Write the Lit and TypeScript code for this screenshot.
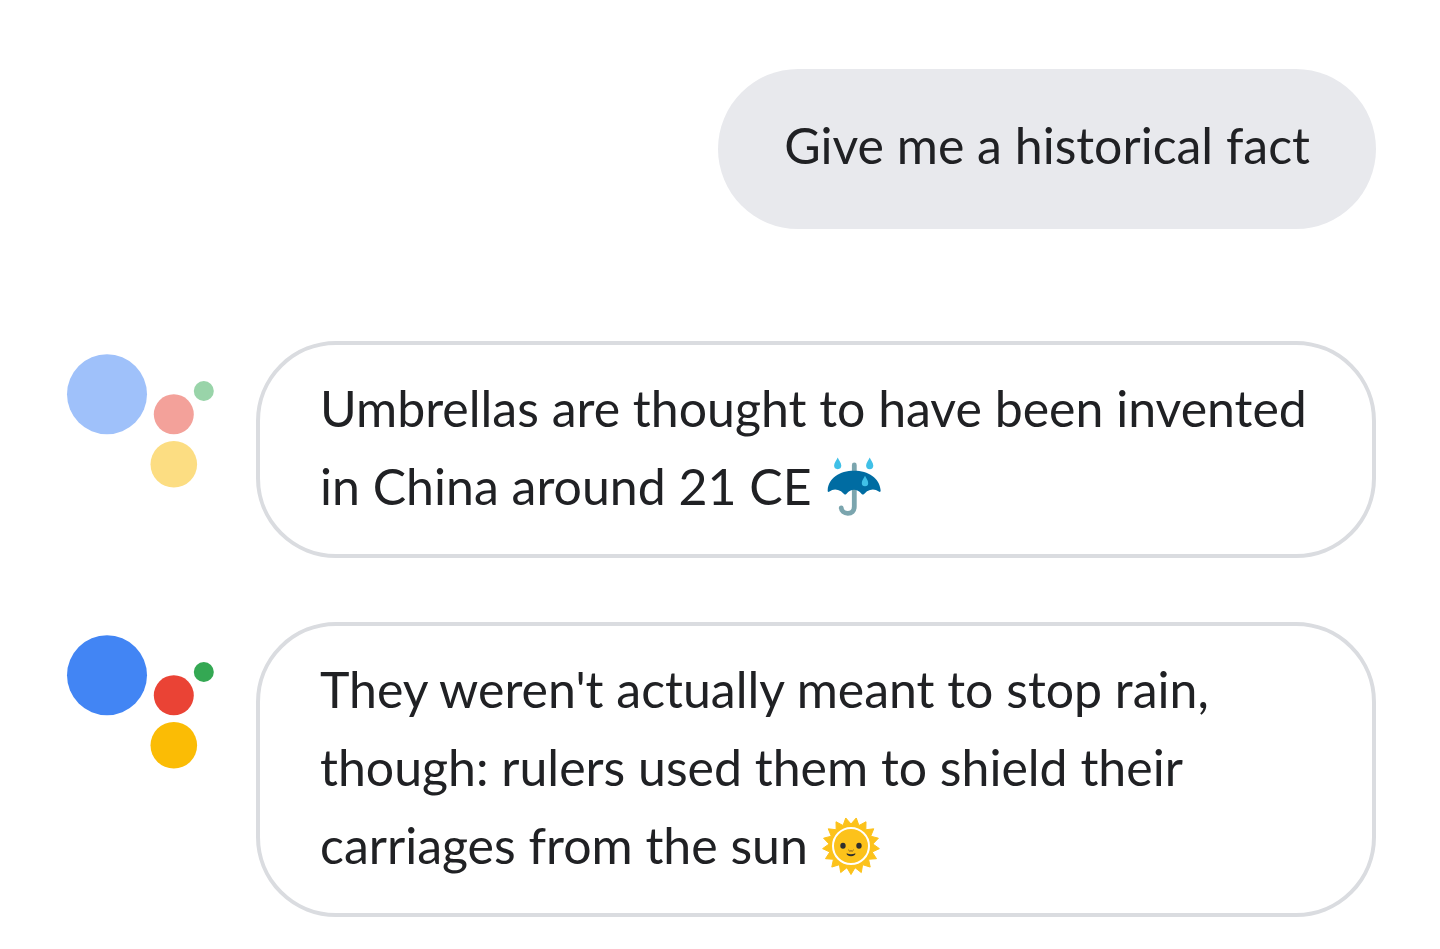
import { LitElement, html, css, svg } from "lit";
import { customElement, property } from "lit/decorators.js";

@customElement("assistant-avatar")
class AssistantAvatar extends LitElement {
  @property({ type: Boolean, reflect: true }) faded = false;

  static styles = css`
    :host { display: block; }
    .logo { display: block; width: 100%; height: auto; }
    .blue { fill: #4285f4; }
    .red { fill: #ea4335; }
    .yellow { fill: #fbbc05; }
    .green { fill: #34a853; }
    :host([faded]) .blue { fill: #9fc1fa; }
    :host([faded]) .red { fill: #f3a19a; }
    :host([faded]) .yellow { fill: #fcdd82; }
    :host([faded]) .green { fill: #99d4a9; }
  `;

  render() {
    return html`
      <svg class="logo" viewBox="0 0 152 136" role="img" aria-label="Assistant">
        <circle class="blue" cx="43" cy="41.300" r="40" />
        <circle class="red" cx="109.800" cy="61.300" r="20" />
        <circle class="yellow" cx="109.800" cy="111.300" r="23.300" />
        <circle class="green" cx="139.800" cy="38" r="10" />
      </svg>
    `;
  }
}

const SUN_RAYS = Array.from({ length: 34 }, (_, i) => {
  const angle = (90 + (i * 180) / 17) * (Math.PI / 180);
  const radius = i % 2 ? 22 : 28.5;
  return `${(30 + radius * Math.cos(angle)).toFixed(2)},${(30 + radius * Math.sin(angle)).toFixed(2)}`;
}).join(" ");

@customElement("chat-emoji")
class ChatEmoji extends LitElement {
  @property() name: "umbrella" | "sun" = "sun";

  static styles = css`
    :host { display: inline-block; vertical-align: -12px; line-height: 1; }
    .glyph { display: block; width: 60px; height: 60px; }
  `;

  private umbrella() {
    return svg`
      <path d="M30.300 8V49.500C30.300 54.300 27.500 56.300 23.800 56.300C20 56.300 17.500 54 17.200 50.800" fill="none" stroke="#7ba5ae" stroke-width="4.800" stroke-linecap="round" />
      <path d="M3.700 33C4.600 21 15.500 13.700 30 13.700S55.500 21 56.600 33C56.800 35 55.900 35.300 54.800 34.600Q49.500 30.500 43 34.200L39.800 37.200Q38.700 38 37.700 37Q34 32.800 30 32.800T22.300 37Q21.300 38 20.300 37.200L17 34.200Q10.500 30.500 5.500 34.600C4.300 35.400 3.500 35 3.700 33Z" fill="#006ca2" />
      <g fill="#40c0e7">
        <path d="M13.700 0.500C14.800 3.500 17.300 5.700 17.300 8.600A3.600 3.600 0 0 1 10.100 8.600C10.100 5.700 12.600 3.500 13.700 0.500Z" />
        <path d="M45.700 0.500C46.800 3.500 49.300 5.700 49.300 8.600A3.600 3.600 0 0 1 42.100 8.600C42.100 5.700 44.600 3.500 45.700 0.500Z" />
        <path d="M41 18.800C42 21.300 44.200 23.500 44.200 26A3.200 3.200 0 0 1 37.800 26C37.800 23.500 40 21.300 41 18.800Z" />
      </g>
    `;
  }

  private sun() {
    return svg`
      <polygon points=${SUN_RAYS} fill="#fcc21b" stroke="#fcc21b" stroke-width="1" stroke-linejoin="round" />
      <circle cx="30" cy="30" r="18" fill="#fcc21b" stroke="#fff" stroke-width="2" />
      <g fill="#2f2f2f">
        <ellipse cx="22" cy="29.700" rx="2.700" ry="3" />
        <ellipse cx="38" cy="29.700" rx="2.700" ry="3" />
        <path d="M25.600 37.200Q30 39.200 34.400 37.200C34.600 38.800 32.800 40.200 30 40.200S25.400 38.800 25.600 37.200Z" />
      </g>
      <path d="M27.300 33.800Q28.700 36 30 34.800Q31.300 36 32.700 33.800" fill="none" stroke="#80591b" stroke-width="1" />
    `;
  }

  render() {
    return html`
      <svg class="glyph" viewBox="0 0 60 60" role="img" aria-label=${this.name}>
        ${this.name === "umbrella" ? this.umbrella() : this.sun()}
      </svg>
    `;
  }
}

@customElement("app-root")
class AppRoot extends LitElement {
  static styles = css`
    :host {
      display: block;
      background: #fff;
      color: #202124;
      font-family: Lato, "Noto Sans", sans-serif;
      font-size: 50px;
      line-height: 78px;
    }
    .chat {
      display: flex;
      flex-direction: column;
      gap: 64px;
      padding: 69px 64px 32px;
    }
    p { margin: 0; }
    .query {
      align-self: flex-end;
      margin-bottom: 48px;
      padding: 37px 66px 45px;
      border-radius: 80px;
      background: #e8e9ed;
    }
    .reply {
      display: grid;
      grid-template-columns: 152px minmax(0, 1fr);
      gap: 40px;
      align-items: start;
    }
    .avatar { margin-top: 12px; }
    .bubble {
      padding: 24px 60px 29px;
      border: 4px solid #dadce0;
      border-radius: 80px;
    }
  `;

  render() {
    return html`
      <main class="chat">
        <p class="query">Give me a historical fact</p>
        <article class="reply">
          <assistant-avatar class="avatar" faded></assistant-avatar>
          <p class="bubble">Umbrellas are thought to have been invented in China around 21 CE <chat-emoji name="umbrella"></chat-emoji></p>
        </article>
        <article class="reply">
          <assistant-avatar class="avatar"></assistant-avatar>
          <p class="bubble">They weren't actually meant to stop rain, though: rulers used them to shield their carriages from the sun <chat-emoji name="sun"></chat-emoji></p>
        </article>
      </main>
    `;
  }
}
